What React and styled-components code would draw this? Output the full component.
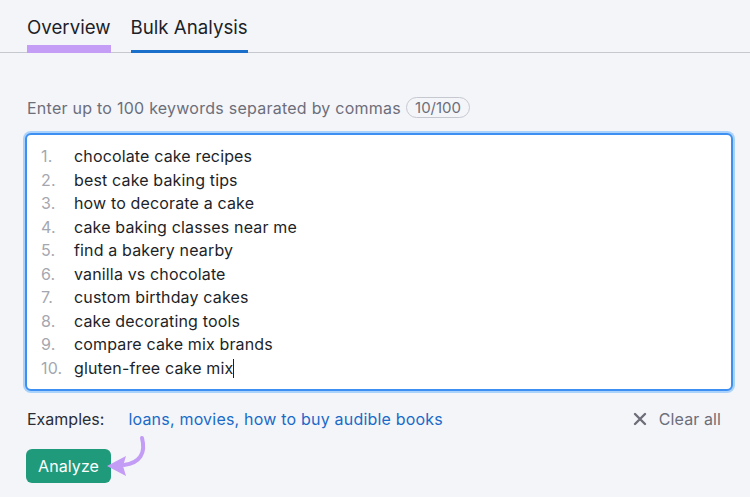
import React from "react";
import styled, { createGlobalStyle } from "styled-components";

const GlobalStyle = createGlobalStyle`
  html, body {
    margin: 0;
    padding: 0;
    background: #f4f5f9;
    font-family: Inter, "Noto Sans", "Liberation Sans", sans-serif;
    color: #1d1f29;
  }
`;

const keywords = [
  "chocolate cake recipes",
  "best cake baking tips",
  "how to decorate a cake",
  "cake baking classes near me",
  "find a bakery nearby",
  "vanilla vs chocolate",
  "custom birthday cakes",
  "cake decorating tools",
  "compare cake mix brands",
  "gluten-free cake mix",
];

const Page = styled.div`
  width: 750px;
  height: 497px;
  box-sizing: border-box;
  overflow: hidden;
`;

const Tabs = styled.nav`
  display: flex;
  gap: 20px;
  padding-left: 27px;
  border-bottom: 1px solid #c6c8d0;
  height: 52px;
  align-items: flex-end;
`;

const Tab = styled.div`
  font-size: 18.7px;
  line-height: 24px;
  padding-top: 16px;
  padding-bottom: ${({ $highlight }) => ($highlight ? "5px" : "10px")};
  margin-bottom: -1px;
  border-bottom: ${({ $highlight, $active }) =>
    $highlight
      ? "8px solid #c49ef6"
      : $active
      ? "3px solid #1a6fcb"
      : "3px solid transparent"};
  color: #1d1f29;
`;

const Body = styled.div`
  padding: 0 17px 0 27px;
`;

const LabelRow = styled.div`
  display: flex;
  align-items: center;
  gap: 5px;
  margin-top: 44px;
  height: 21px;
  font-size: 16px;
  letter-spacing: 0.25px;
  color: #6c6e79;
`;

const Badge = styled.span`
  display: inline-flex;
  align-items: center;
  height: 19px;
  padding: 0 8px;
  border: 1px solid #c6c8d0;
  border-radius: 11px;
  font-size: 15px;
  letter-spacing: 0;
  color: #6c6e79;
`;

const Editor = styled.div`
  margin: 15px 0 0 -2px;
  background: #fff;
  border: 2px solid #3d90f2;
  box-shadow: 0 0 0 2px #aad2fa;
  border-radius: 6px;
  padding: 10px 14px 9px;
  height: 258px;
  box-sizing: border-box;
`;

const Line = styled.div`
  display: flex;
  font-size: 16px;
  line-height: 23.5px;
  letter-spacing: 0.15px;
  color: #1d1f29;
`;

const Num = styled.span`
  width: 33px;
  flex: none;
  color: #a5a7b0;
`;

const Caret = styled.span`
  display: inline-block;
  width: 1px;
  height: 19px;
  background: #1d1f29;
  vertical-align: -4px;
`;

const ExamplesRow = styled.div`
  display: flex;
  align-items: center;
  margin-top: 16px;
  height: 24px;
  font-size: 16px;
`;

const ExLabel = styled.span`
  color: #2a2c36;
  margin-right: 24px;
`;

const ExLink = styled.a`
  color: #1a6ac8;
  letter-spacing: 0.2px;
  text-decoration: none;
`;

const ClearAll = styled.button`
  margin-left: auto;
  margin-right: 12px;
  display: flex;
  align-items: center;
  gap: 12px;
  background: none;
  border: none;
  padding: 0;
  font-family: inherit;
  font-size: 16px;
  letter-spacing: 0.1px;
  color: #6c6e79;
`;

const ButtonRow = styled.div`
  position: relative;
  margin-top: 18px;
  margin-left: -1px;
`;

const AnalyzeButton = styled.button`
  height: 34px;
  padding: 0 12px;
  border: none;
  border-radius: 6px;
  background: #1f9b7c;
  color: #fff;
  font-family: inherit;
  font-size: 16px;
  letter-spacing: 0.1px;
`;

const Arrow = styled.svg`
  position: absolute;
  left: 78px;
  top: -16px;
`;

export default function App() {
  return (
    <Page>
      <GlobalStyle />
      <Tabs>
        <Tab $highlight>Overview</Tab>
        <Tab $active>Bulk Analysis</Tab>
      </Tabs>
      <Body>
        <LabelRow>
          Enter up to 100 keywords separated by commas
          <Badge>10/100</Badge>
        </LabelRow>
        <Editor>
          {keywords.map((k, i) => (
            <Line key={k}>
              <Num>{i + 1}.</Num>
              <span>
                {k}
                {i === keywords.length - 1 && <Caret />}
              </span>
            </Line>
          ))}
        </Editor>
        <ExamplesRow>
          <ExLabel>Examples:</ExLabel>
          <ExLink href="#">loans, movies, how to buy audible books</ExLink>
          <ClearAll>
            <svg width="14" height="14" viewBox="0 0 14 14">
              <path
                d="M2 2 L12 12 M12 2 L2 12"
                stroke="#6c6e79"
                strokeWidth="2.4"
                strokeLinecap="round"
              />
            </svg>
            Clear all
          </ClearAll>
        </ExamplesRow>
        <ButtonRow>
          <AnalyzeButton>Analyze</AnalyzeButton>
          <Arrow width="46" height="50" viewBox="0 0 46 50">
            <path
              d="M38 5 C42 20 36 30 20 32"
              fill="none"
              stroke="#c39cf6"
              strokeWidth="4"
              strokeLinecap="round"
            />
            <path d="M3 33 L22 23 L19 33 L22 43 Z" fill="#c39cf6" />
          </Arrow>
        </ButtonRow>
      </Body>
    </Page>
  );
}
